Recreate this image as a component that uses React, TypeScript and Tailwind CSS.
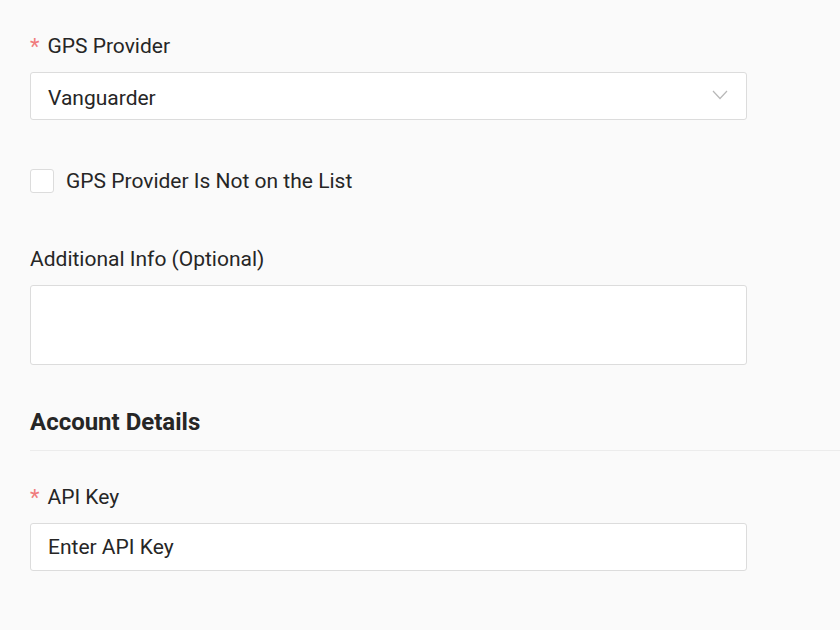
function Required() {
  return <span className="mr-[8px] mt-[2px] text-[22px] leading-none text-[#f07c7c]">*</span>
}

export default function App() {
  return (
    <div className="min-h-[630px] w-full overflow-hidden bg-[#fafafa] pl-[30px] pt-[34px] font-['Roboto',sans-serif] text-[#262626]">
      <div className="w-[717px]">
        <div className="flex h-[24px] items-center text-[21px] leading-[24px]">
          <Required />
          GPS Provider
        </div>
        <div className="mt-[14px] flex h-[48px] items-center justify-between rounded-[3px] border border-[#dcdcdc] bg-white pl-[17px] pr-[18px] text-[21px]">
          <span className="mt-[5px]">Vanguarder</span>
          <svg width="16" height="10" viewBox="0 0 16 10" fill="none" className="-mt-[3px]">
            <polyline points="1,1 8,8.5 15,1" stroke="#b8b8b8" strokeWidth="1.2" />
          </svg>
        </div>

        <label className="mt-[49px] flex h-[24px] items-center gap-[12px] text-[21px]">
          <input type="checkbox" className="size-[24px] appearance-none rounded-[3px] border border-[#dcdcdc] bg-white" />
          <span className="mt-[2px]">GPS Provider Is Not on the List</span>
        </label>

        <div className="mt-[54px] h-[24px] text-[21px] leading-[24px]">Additional Info (Optional)</div>
        <textarea className="mt-[14px] block h-[80px] w-full resize-none rounded-[3px] border border-[#dcdcdc] bg-white" />
      </div>

      <h3 className="mt-[43px] h-[28px] text-[24px] font-bold leading-[28px]">Account Details</h3>
      <div className="mt-[14px] h-px bg-[#ececec]" />

      <div className="mt-[34px] w-[717px]">
        <div className="flex h-[24px] items-center text-[21px] leading-[24px]">
          <Required />
          API Key
        </div>
        <input
          placeholder="Enter API Key"
          className="mt-[14px] block h-[48px] w-full rounded-[3px] border border-[#dcdcdc] bg-white pl-[17px] text-[21px] text-[#262626] placeholder:text-[#262626]"
        />
      </div>
    </div>
  )
}
